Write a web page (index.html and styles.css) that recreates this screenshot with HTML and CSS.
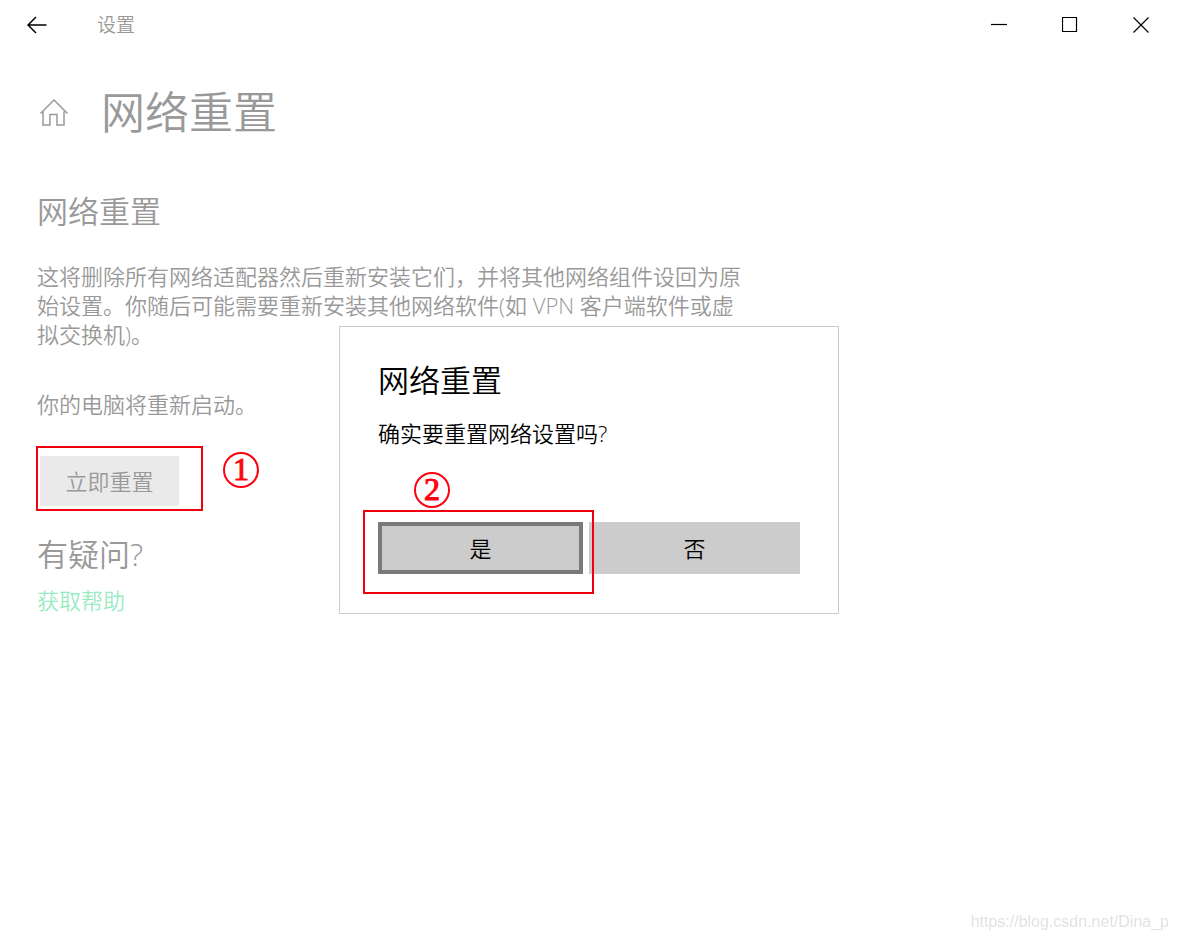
FILE: index.html
```
<!DOCTYPE html>
<html lang="zh-CN">
<head>
  <meta charset="UTF-8">
  <meta name="viewport" content="width=device-width, initial-scale=1.0">
  <title>设置</title>
  <link rel="stylesheet" href="styles.css">
</head>
<body>
  <header class="titlebar">
    <button class="back" aria-label="返回">
      <svg width="20" height="18" viewBox="0 0 20 18"><path d="M19.500 9H1.500M9 1L1 9l8 8" /></svg>
    </button>
    <span class="app-name">设置</span>
    <div class="window-controls">
      <button aria-label="最小化"><svg width="16" height="16" viewBox="0 0 16 16"><path d="M0 7.500h16" /></svg></button>
      <button aria-label="最大化"><svg width="16" height="16" viewBox="0 0 16 16"><path d="M.5.5h14v14H.5z" /></svg></button>
      <button aria-label="关闭"><svg width="16" height="16" viewBox="0 0 16 16"><path d="M.5.5l15 15M15.500.5l-15 15" /></svg></button>
    </div>
  </header>

  <main class="page">
    <div class="page-head">
      <a href="#" class="home" aria-label="主页">
        <svg width="30" height="28" viewBox="0 0 30 28"><path d="M1.500 15.500L15 2l13.500 13.500M4 13.500v13.500h7V16.500h7V27h7V13.500" /></svg>
      </a>
      <h1>网络重置</h1>
    </div>

    <h2>网络重置</h2>
    <p class="desc">这将删除所有网络适配器然后重新安装它们，并将其他网络组件设回为原始设置。你随后可能需要重新安装其他网络软件(如 VPN 客户端软件或虚拟交换机)。</p>
    <p class="restart">你的电脑将重新启动。</p>

    <div class="reset">
      <button class="reset-btn">立即重置</button>
      <span class="mark mark-reset"></span>
      <span class="step step-one">1</span>
    </div>

    <h3>有疑问?</h3>
    <a href="#" class="help">获取帮助</a>
  </main>

  <div class="overlay">
    <div class="dialog" role="dialog" aria-labelledby="dialog-title">
      <h2 id="dialog-title">网络重置</h2>
      <p>确实要重置网络设置吗?</p>
      <div class="actions">
        <div class="confirm">
          <button class="btn btn-yes">是</button>
          <span class="mark mark-yes"></span>
          <span class="step step-two">2</span>
        </div>
        <button class="btn">否</button>
      </div>
    </div>
  </div>

  <div class="watermark">https://blog.csdn.net/Dina_p</div>
</body>
</html>
```
FILE: styles.css
```
* {
  box-sizing: border-box;
}
body {
  margin: 0;
  min-height: 100vh;
  background: #fff;
  color: #999;
  font-family: "Open Sans", "Noto Sans CJK SC", sans-serif;
  font-weight: 350;
  font-size: 22px;
  line-height: 29px;
}
h1, h2, h3, p {
  margin: 0;
  font-weight: 350;
}
button {
  border: none;
  padding: 0;
  font: inherit;
  color: inherit;
  background: none;
}
a {
  color: inherit;
  text-decoration: none;
}
svg {
  display: block;
  fill: none;
  stroke: currentColor;
}

/* title bar */
.titlebar {
  display: flex;
  align-items: center;
  height: 50px;
  padding: 0 2px 0 27px;
}
.back {
  color: #000;
}
.back svg {
  stroke-width: 1.5;
}
.app-name {
  margin-left: 50px;
  font-size: 19px;
}
.window-controls {
  display: flex;
  margin-left: auto;
  color: #000;
}
.window-controls button {
  display: flex;
  justify-content: center;
  width: 71px;
}
.window-controls svg {
  stroke-width: 1.2;
}

/* page */
.page {
  padding: 32px 37px;
}
.page-head {
  display: flex;
  align-items: center;
  gap: 32px;
  padding-left: 2px;
}
.home svg {
  stroke-width: 1.5;
}
h1 {
  font-size: 44px;
  line-height: 60px;
}
h2 {
  font-size: 31px;
  line-height: 40px;
}
.page h2 {
  margin: 49px 0 31px;
}
.desc {
  max-width: 710px;
}
.restart {
  margin-top: 41px;
}
.reset {
  position: relative;
  margin: 37px 0 28px;
  padding-left: 3px;
}
.reset-btn {
  display: block;
  width: 139px;
  height: 50px;
  background: #eaeaea;
}
h3 {
  font-size: 31px;
  line-height: 40px;
  margin-bottom: 12px;
}
.help {
  color: #99ebc2;
}

/* dialog */
.overlay {
  position: fixed;
  inset: 0;
  display: flex;
  align-items: center;
  justify-content: center;
}
.dialog {
  width: 500px;
  padding: 31px 38px 39px;
  border: 1px solid #ccc;
  background: #fff;
  color: #000;
}
.dialog h2 {
  line-height: 44px;
  margin-bottom: 17px;
}
.actions {
  display: grid;
  grid-template-columns: 34fr 35fr;
  gap: 6px;
  margin-top: 74px;
}
.confirm {
  position: relative;
}
.btn {
  width: 100%;
  height: 52px;
  background: #ccc;
}
.btn-yes {
  display: block;
  border: 4px solid #7a7a7a;
}

/* red step marks */
.mark {
  position: absolute;
  border: 2px solid #f0000f;
  pointer-events: none;
}
.mark-reset {
  left: -1px;
  top: -10px;
  width: 167px;
  height: 65px;
}
.mark-yes {
  inset: -12px -11px -20px -15px;
}
.step {
  position: absolute;
  width: 36px;
  height: 36px;
  border: 2px solid #ff0010;
  border-radius: 50%;
  color: #ff0010;
  font-family: "Liberation Serif", serif;
  font-weight: 400;
  font-size: 32px;
  line-height: 31px;
  text-align: center;
  -webkit-text-stroke: 1px #ff0010;
}
.step-one {
  left: 186px;
  top: -4px;
}
.step-two {
  left: 36px;
  top: -50px;
}

.watermark {
  position: fixed;
  right: 9px;
  bottom: 8px;
  color: #e2e2e2;
  font-family: "Liberation Sans", sans-serif;
  font-weight: 400;
  font-size: 16px;
  line-height: 20px;
}
```
